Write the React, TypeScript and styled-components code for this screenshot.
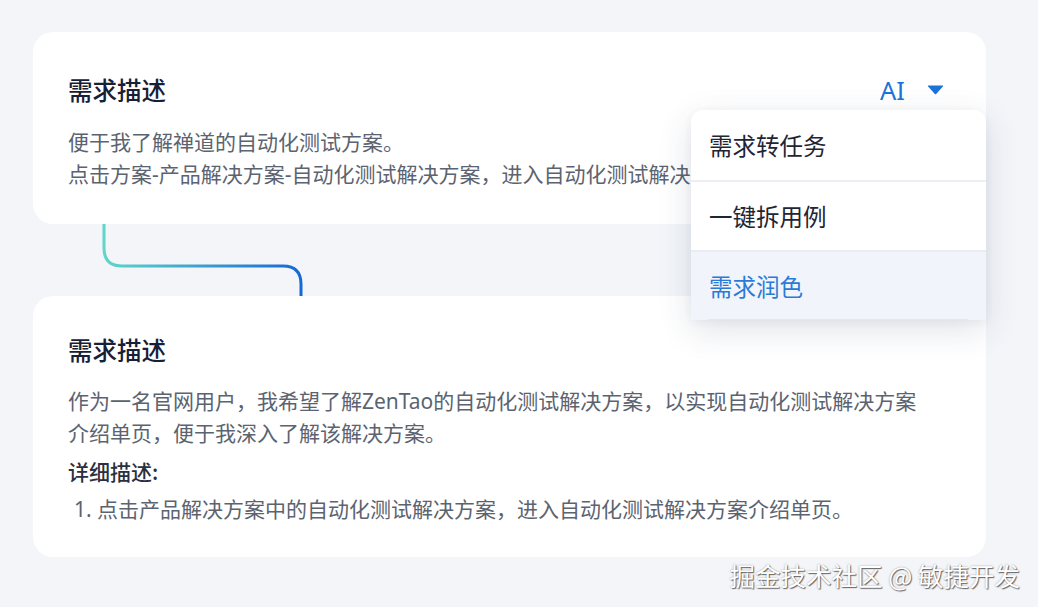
import styled, { createGlobalStyle } from 'styled-components';

const GlobalStyle = createGlobalStyle`
  html, body {
    margin: 0;
    padding: 0;
    background: #f3f5f9;
    font-family: "Noto Sans", "Noto Sans CJK SC", sans-serif;
  }
`;

const Page = styled.div`
  position: relative;
  box-sizing: border-box;
  width: 1038px;
  height: 607px;
  padding: 32px 52px 0 33px;
  display: flex;
  flex-direction: column;
  overflow: hidden;
`;

const Card = styled.section<{ $raised?: boolean }>`
  position: relative;
  z-index: ${({ $raised }) => ($raised ? 2 : 1)};
  box-sizing: border-box;
  background: #ffffff;
  border-radius: 20px;
  display: flex;
  flex-direction: column;
`;

const TopCard = styled(Card)`
  height: 192px;
  padding: 40px 42px 0 35px;
`;

const BottomCard = styled(Card)`
  height: 261px;
  padding: 36px 42px 0 35px;
`;

const Header = styled.div`
  display: flex;
  align-items: center;
  justify-content: space-between;
`;

const Title = styled.h2`
  margin: 0;
  font-family: "Noto Sans CJK SC", sans-serif;
  font-size: 24.5px;
  line-height: 36px;
  font-weight: 500;
  color: #162036;
`;

const AiButton = styled.div`
  display: flex;
  align-items: center;
  gap: 22px;
  color: #1d72d8;
  font-size: 25.5px;
  line-height: 36px;
  font-family: "Noto Sans", sans-serif;
`;

const Body = styled.div<{ $gap: number }>`
  margin-top: ${({ $gap }) => $gap}px;
  font-size: 21px;
  line-height: 32px;
  color: #5c6370;
`;

const Line = styled.div`
  white-space: nowrap;
`;

const DetailLabel = styled.div`
  margin-top: 6px;
  font-family: "Noto Sans CJK SC", sans-serif;
  font-size: 21px;
  line-height: 32px;
  font-weight: 500;
  color: #2a3040;
`;

const List = styled.ol`
  margin: 6px 0 0;
  padding: 0 0 0 6px;
  list-style: none;
  font-size: 21px;
  line-height: 32px;
  color: #5c6370;
`;

const Connector = styled.svg`
  display: block;
  width: 953px;
  height: 72px;
  flex: none;
`;

const Menu = styled.ul`
  position: absolute;
  top: 78px;
  right: 0;
  width: 295px;
  margin: 0;
  padding: 0;
  list-style: none;
  background: #ffffff;
  border-radius: 12px 12px 0 0;
  box-shadow: 0 10px 34px rgba(40, 60, 100, 0.14), 0 2px 8px rgba(40, 60, 100, 0.06);
  overflow: hidden;
`;

const MenuItem = styled.li<{ $active?: boolean }>`
  position: relative;
  box-sizing: border-box;
  height: 70px;
  display: flex;
  align-items: center;
  padding-left: 18px;
  font-size: 23.5px;
  color: ${({ $active }) => ($active ? '#2b7bd6' : '#1f2633')};
  background: ${({ $active }) => ($active ? '#f1f4fb' : '#ffffff')};
  border-top: ${({ $active }) => ($active ? '2px solid #e9ecf2' : 'none')};

  &:nth-child(2) {
    border-top: 2px solid #eceef3;
  }

  &:last-child::after {
    content: '';
    position: absolute;
    left: 17px;
    right: 18px;
    bottom: 0;
    height: 1px;
    background: #e3e7ee;
  }
`;

const Watermark = styled.div`
  position: absolute;
  right: 18px;
  bottom: 16px;
  font-family: "Noto Sans CJK SC", sans-serif;
  font-size: 25.5px;
  line-height: 32px;
  color: #ffffff;
  text-shadow: 1px 1px 1px rgba(0, 0, 0, 0.55), 0 0 2px rgba(0, 0, 0, 0.35);
`;

const Caret = () => (
  <svg width="17" height="10" viewBox="0 0 17 10">
    <path d="M1.5 0.5 H15.5 Q16.8 0.5 15.9 1.6 L9.4 8.8 Q8.5 9.8 7.6 8.8 L1.1 1.6 Q0.2 0.5 1.5 0.5 Z" fill="#1d72d8" />
  </svg>
);

const menuItems = ['需求转任务', '一键拆用例', '需求润色'];

export default function App() {
  return (
    <>
      <GlobalStyle />
      <Page>
        <TopCard $raised>
          <Header>
            <Title>需求描述</Title>
            <AiButton>
              AI
              <Caret />
            </AiButton>
          </Header>
          <Body $gap={18}>
            <Line>便于我了解禅道的自动化测试方案。</Line>
            <Line>点击方案-产品解决方案-自动化测试解决方案，进入自动化测试解决方案介绍单页。</Line>
          </Body>
          <Menu>
            {menuItems.map((item, i) => (
              <MenuItem key={item} $active={i === 2}>
                {item}
              </MenuItem>
            ))}
          </Menu>
        </TopCard>
        <Connector viewBox="0 0 953 72">
          <defs>
            <linearGradient id="flow" x1="71" y1="0" x2="268" y2="0" gradientUnits="userSpaceOnUse">
              <stop offset="0" stopColor="#5fd6c9" />
              <stop offset="1" stopColor="#1668d4" />
            </linearGradient>
          </defs>
          <path
            d="M71 0 V24 Q71 42 89 42 H250 Q268 42 268 60 V72"
            fill="none"
            stroke="url(#flow)"
            strokeWidth="3"
          />
        </Connector>
        <BottomCard>
          <Title>需求描述</Title>
          <Body $gap={17}>
            <Line>作为一名官网用户，我希望了解ZenTao的自动化测试解决方案，以实现自动化测试解决方案</Line>
            <Line>介绍单页，便于我深入了解该解决方案。</Line>
          </Body>
          <DetailLabel>详细描述:</DetailLabel>
          <List>
            <li>1. 点击产品解决方案中的自动化测试解决方案，进入自动化测试解决方案介绍单页。</li>
          </List>
        </BottomCard>
        <Watermark>掘金技术社区 @ 敏捷开发</Watermark>
      </Page>
    </>
  );
}
